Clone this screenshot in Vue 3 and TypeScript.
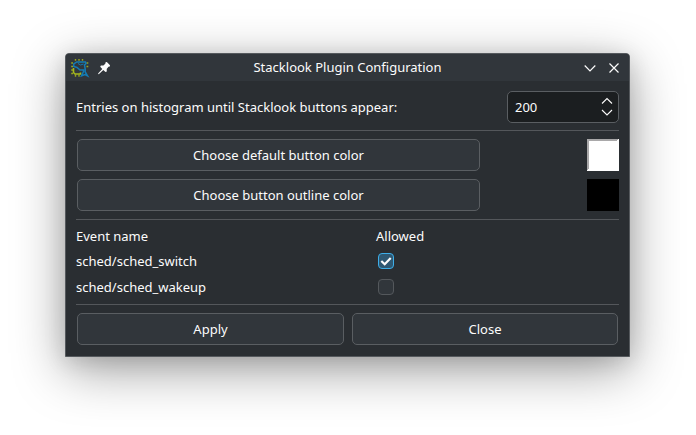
<script setup lang="ts">
import { ref } from 'vue'

interface TraceEvent {
  name: string
  allowed: boolean
}

const threshold = ref<number>(200)
const colors = [
  { label: 'Choose default button color', kind: 'white' },
  { label: 'Choose button outline color', kind: 'black' },
]
const events = ref<TraceEvent[]>([
  { name: 'sched/sched_switch', allowed: true },
  { name: 'sched/sched_wakeup', allowed: false },
])
</script>

<template>
  <main class="desktop">
    <section class="window">
      <header class="titlebar">
        <svg class="logo" width="20" height="20" viewBox="0 0 20 20" fill="none">
          <path
            d="M5.500 1v1.800M9 1v1.800M12.500 1v1.800M1.200 5h1.800M1.200 8.500h1.800M16.500 5h1.800M16.500 8.500h1.800M1.200 12h1.800M1.200 15.500h1.800M5.500 16.500v2.200M9 16.500v2.200"
            stroke="#97a51f" stroke-width="1.400"
          />
          <path d="M3.500 10v4.500l1.500 1.500h5.500v-1.500" stroke="#a5b81d" stroke-width="1.600" />
          <path
            d="M3.800 8.500V6l3-2h8.700l.5 1.500-1.500 1.500.7 4v3l2.300 3.800-2.500-1.300-3.500 1.300 2-4.300V12H10L7 9.500z"
            stroke="#147bb3" stroke-width="1.500"
          />
          <path d="M8 5.500l2.500 1.500 3-1" stroke="#147bb3" stroke-width="1" />
        </svg>
        <svg class="pin" width="14" height="14" viewBox="0 0 14 14">
          <path
            d="M8.600 1.200 9.800 1l3.200 3.200-.2 1.200-1.300.3-1.800 2.200.1 2.500-1.300.7-2.200-2.200L2 13l-.9.200.2-.9 4-4.400L3.200 5.800l.7-1.300 2.500.1 1.900-1.800z"
            fill="#fcfcfc"
          />
        </svg>
        <h1 class="title">Stacklook Plugin Configuration</h1>
        <svg class="control" width="12" height="12" viewBox="0 0 12 12">
          <path d="M.7 3.500 6 8.800l5.300-5.300" />
        </svg>
        <svg class="control" width="12" height="12" viewBox="0 0 12 12">
          <path d="M1.500 1.500l9 9M10.500 1.500l-9 9" />
        </svg>
      </header>

      <div class="body">
        <div class="threshold">
          <span>Entries on histogram until Stacklook buttons appear:</span>
          <div class="spinbox">
            <span>{{ threshold }}</span>
            <svg width="12" height="20" viewBox="0 0 12 20">
              <path d="M1 6.500l5-5 5 5M1 13l5 5 5-5" />
            </svg>
          </div>
        </div>
        <hr />
        <div class="colors">
          <div v-for="color in colors" :key="color.kind" class="color-row">
            <button class="button">{{ color.label }}</button>
            <svg v-if="color.kind === 'white'" width="32" height="32" viewBox="0 0 32 32">
              <path d="M0 0h32v32H0z" fill="#fff" />
              <path d="M0 0h31v1h-1v1H2v28H1v1H0z" fill="#a9a8a9" />
            </svg>
            <svg v-else width="32" height="32" viewBox="0 0 32 32">
              <path d="M0 0h32v32H0z" fill="#000" />
            </svg>
          </div>
        </div>
        <hr />
        <div class="events">
          <div class="event-row heading">
            <span>Event name</span>
            <span>Allowed</span>
          </div>
          <div v-for="event in events" :key="event.name" class="event-row">
            <span>{{ event.name }}</span>
            <span
              class="checkbox"
              :class="{ checked: event.allowed }"
              role="checkbox"
              :aria-checked="event.allowed"
              @click="event.allowed = !event.allowed"
            >
              <svg v-if="event.allowed" width="14" height="14" viewBox="0 0 14 14">
                <path d="M2.300 7l3.400 3.300 6-6.300" />
              </svg>
            </span>
          </div>
        </div>
        <hr />
        <footer class="actions">
          <button class="button apply">Apply</button>
          <button class="button dismiss">Close</button>
        </footer>
      </div>
    </section>
  </main>
</template>

<style>
body {
  margin: 0;
  background: #fff;
}
</style>

<style scoped>
.desktop {
  box-sizing: border-box;
  width: 696px;
  height: 435px;
  padding: 53px 66px 0 65px;
  overflow: hidden;
  background: #fff;
  color: #fcfcfc;
  font: 13px/18px "Noto Sans", sans-serif;
}

.window {
  box-sizing: border-box;
  height: 304px;
  border: 1px solid #55595d;
  border-radius: 4px 4px 0 0;
  background: #2a2e32;
  box-shadow: 0 13px 52px rgba(0, 0, 0, 0.38), 0 4px 22px rgba(0, 0, 0, 0.12);
}

.titlebar {
  box-sizing: border-box;
  display: grid;
  grid-template-columns: 20px 21px 1fr 12px 12px;
  align-items: center;
  height: 27px;
  padding: 0 9px 0 4px;
  border-radius: 3px 3px 0 0;
  background: #31363b;
}

.pin {
  margin-left: 7px;
}

.title {
  margin: 0;
  padding: 0 12px 1px 0;
  font-size: 13px;
  font-weight: 400;
  text-align: center;
}

.control {
  fill: none;
  stroke: #fcfcfc;
  stroke-width: 1.2;
}

.title + .control {
  margin-left: -12px;
}

.body {
  padding: 10px 10px 11px;
}

hr {
  height: 1px;
  margin: 0;
  border: 0;
  background: #54575b;
}

.threshold {
  display: flex;
  align-items: center;
  justify-content: space-between;
  margin-bottom: 7px;
}

.spinbox {
  box-sizing: border-box;
  display: flex;
  align-items: center;
  justify-content: space-between;
  width: 112px;
  height: 32px;
  padding: 0 5px 0 7px;
  border: 1px solid #5a5e62;
  border-radius: 5px;
  background: #1b1e20;
}

.spinbox svg {
  fill: none;
  stroke: #fcfcfc;
  stroke-width: 1.1;
}

.colors {
  display: grid;
  gap: 8px;
  padding: 8px 0 8px 1px;
}

.color-row {
  display: flex;
  justify-content: space-between;
}

.color-row .button {
  width: 403px;
}

.button {
  box-sizing: border-box;
  height: 32px;
  padding: 0;
  border: 1px solid #5a5e62;
  border-radius: 5px;
  background: #31363b;
  color: inherit;
  font: inherit;
}

.events {
  display: grid;
  gap: 8px;
  padding: 7px 0 8px;
}

.event-row {
  display: grid;
  grid-template-columns: 300px 1fr;
  align-items: center;
  height: 18px;
}

.heading {
  margin-bottom: -1px;
}

.checkbox {
  box-sizing: border-box;
  width: 16px;
  height: 16px;
  margin-left: 2px;
  border: 1px solid #54585c;
  border-radius: 4px;
  background: #31363b;
}

.checkbox.checked {
  border-color: #3daee9;
  background: #2f5872;
}

.checkbox svg {
  display: block;
  fill: none;
  stroke: #fcfcfc;
  stroke-width: 2.2;
}

.actions {
  display: flex;
  gap: 8px;
  padding: 8px 1px 0;
}

.apply {
  width: 267px;
}

.dismiss {
  width: 266px;
}
</style>
